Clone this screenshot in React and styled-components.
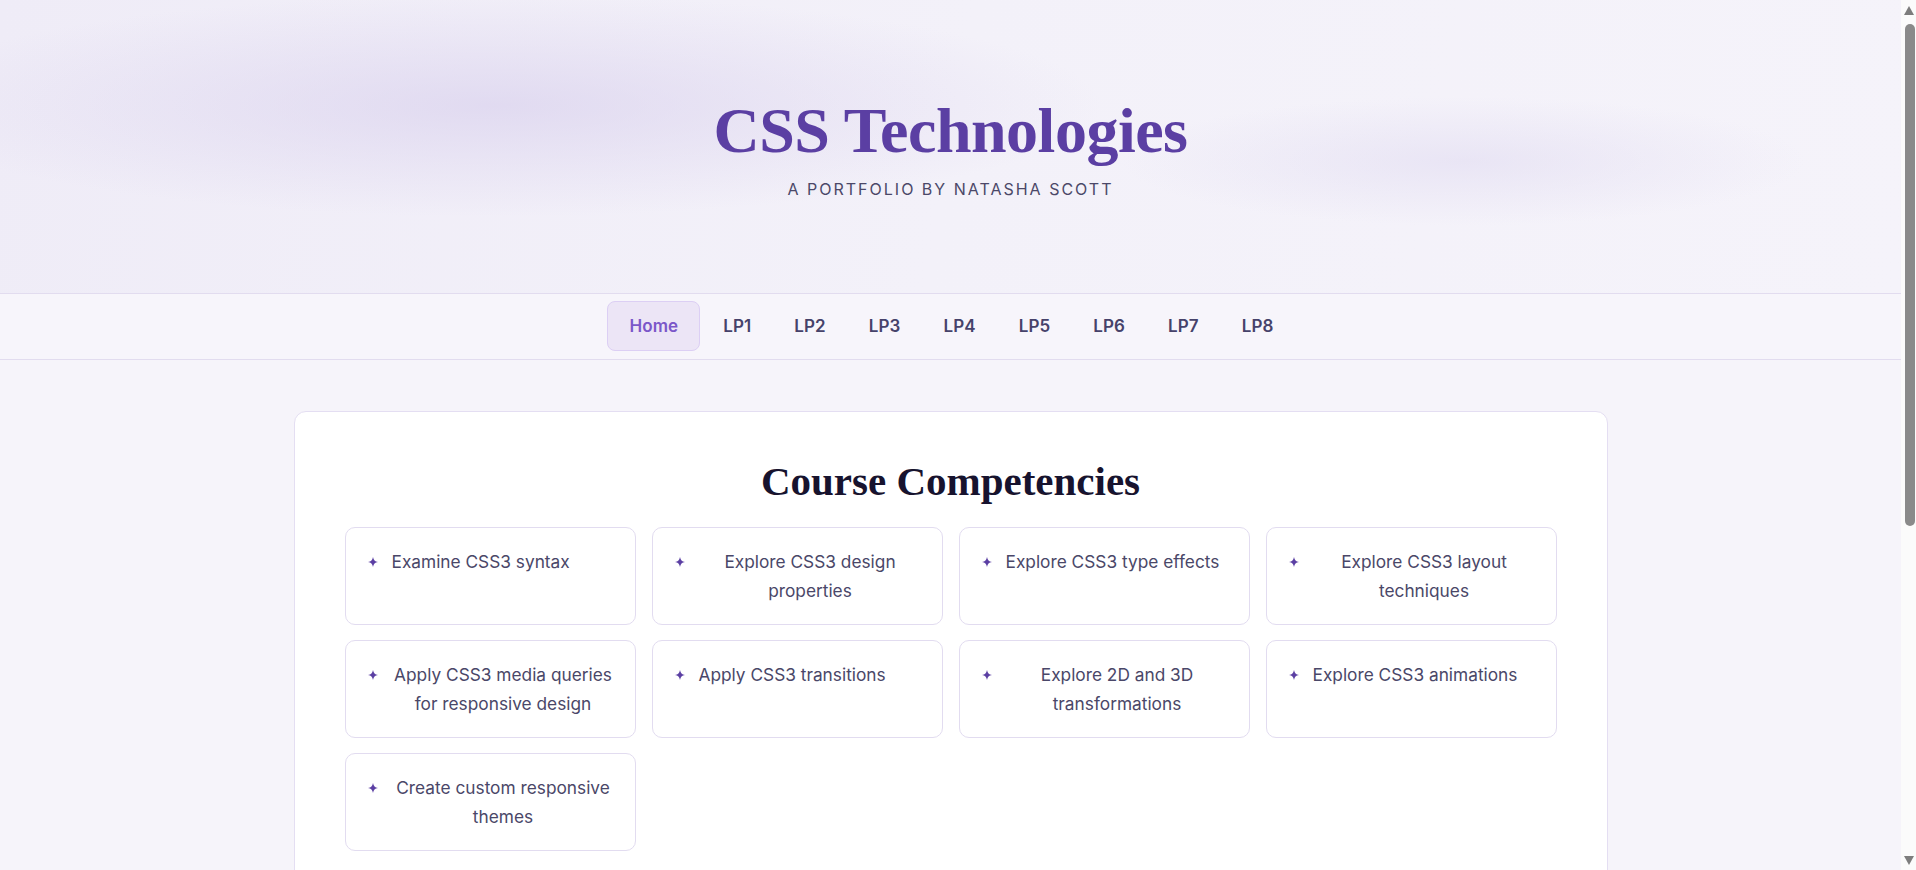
import React from "react";
import styled, { createGlobalStyle } from "styled-components";

const GlobalStyle = createGlobalStyle`
  * { box-sizing: border-box; }
  body {
    margin: 0;
    padding-right: 15px;
    background: #f6f4fa;
    font-family: Inter, "Noto Sans", "Liberation Sans", sans-serif;
    color: #4a4768;
  }
`;

const competencies = [
  "Examine CSS3 syntax",
  "Explore CSS3 design properties",
  "Explore CSS3 type effects",
  "Explore CSS3 layout techniques",
  "Apply CSS3 media queries for responsive design",
  "Apply CSS3 transitions",
  "Explore 2D and 3D transformations",
  "Explore CSS3 animations",
  "Create custom responsive themes",
];

const links = ["Home", "LP1", "LP2", "LP3", "LP4", "LP5", "LP6", "LP7", "LP8"];

const Header = styled.header`
  height: 293px;
  padding-top: 92px;
  text-align: center;
  background:
    radial-gradient(ellipse 32% 38% at 26% 36%, rgba(214, 205, 236, 0.6), rgba(214, 205, 236, 0) 100%),
    radial-gradient(ellipse 18% 22% at 77% 55%, rgba(222, 216, 240, 0.5), rgba(222, 216, 240, 0) 100%),
    linear-gradient(100deg, #efecf7 0%, #f3f1f9 50%, #f5f3fa 100%);
`;

const Title = styled.h1`
  margin: 0;
  font-family: "Liberation Serif", "DejaVu Serif", serif;
  font-weight: 700;
  font-size: 64px;
  line-height: 77px;
  letter-spacing: -0.5px;
  color: #5b3fa3;
`;

const Subtitle = styled.p`
  margin: 8px 0 0;
  font-size: 16px;
  line-height: 24px;
  letter-spacing: 2px;
  text-transform: uppercase;
  color: #4b4868;
`;

const Nav = styled.nav`
  display: flex;
  justify-content: center;
  gap: 3px;
  padding: 7px 0 8px;
  background: #f7f5fb;
  border-top: 1px solid #e2dcef;
  border-bottom: 1px solid #e2dcef;
`;

const NavLink = styled.a`
  display: block;
  padding: 12px ${(p) => (p.$active ? "21px" : "19px")};
  border-radius: 8px;
  border: 1px solid ${(p) => (p.$active ? "#dccff4" : "transparent")};
  background: ${(p) => (p.$active ? "#ece5f6" : "transparent")};
  color: ${(p) => (p.$active ? "#7b57c9" : "#46426a")};
  font-size: 17px;
  font-weight: 600;
  line-height: 24px;
  letter-spacing: 0.1px;
  text-decoration: none;
  cursor: pointer;
`;

const Main = styled.main`
  padding: 51px 0 60px;
`;

const Card = styled.section`
  width: 1314px;
  margin: 0 auto;
  padding: 45px 50px 52px;
  background: #fff;
  border: 1px solid #e4def2;
  border-radius: 12px;
`;

const Heading = styled.h2`
  margin: 0 0 22px;
  text-align: center;
  font-family: "Liberation Serif", "DejaVu Serif", serif;
  font-weight: 700;
  font-size: 41px;
  line-height: 48px;
  color: #17132e;
`;

const Grid = styled.ul`
  display: grid;
  grid-template-columns: repeat(4, 1fr);
  gap: 15px 16px;
  margin: 0;
  padding: 0;
  list-style: none;
`;

const Item = styled.li`
  display: flex;
  align-items: flex-start;
  gap: 14px;
  padding: 19px 20px 19px 22px;
  border: 1px solid #e2dcf0;
  border-radius: 10px;
  font-size: 17.3px;
  line-height: 29px;
  text-align: center;
  color: #4a4768;
`;

const Star = styled.svg`
  flex: none;
  width: 10px;
  height: 10px;
  margin-top: 10px;
  fill: #5b3fa3;
`;

const ScrollTrack = styled.div`
  position: fixed;
  top: 0;
  right: 0;
  bottom: 0;
  width: 15px;
  background: #fbfbfb;
`;

const ScrollThumb = styled.div`
  position: absolute;
  top: 24px;
  left: 4px;
  width: 10px;
  height: 502px;
  border-radius: 5px;
  background: #8a8a8a;
`;

const Arrow = styled.div`
  position: absolute;
  left: 3px;
  ${(p) => (p.$down ? "bottom: 5px;" : "top: 6px;")}
  width: 0;
  height: 0;
  border-left: 5px solid transparent;
  border-right: 5px solid transparent;
  ${(p) =>
    p.$down ? "border-top: 9px solid #7d7d7d;" : "border-bottom: 9px solid #7d7d7d;"}
`;

function Spark() {
  return (
    <Star viewBox="0 0 10 10">
      <path d="M5 0 C5.6 3.2 6.8 4.4 10 5 C6.8 5.6 5.6 6.8 5 10 C4.4 6.8 3.2 5.6 0 5 C3.2 4.4 4.4 3.2 5 0 Z" />
    </Star>
  );
}

export default function App() {
  return (
    <>
      <GlobalStyle />
      <Header>
        <Title>CSS Technologies</Title>
        <Subtitle>A Portfolio by Natasha Scott</Subtitle>
      </Header>
      <Nav>
        {links.map((l) => (
          <NavLink key={l} $active={l === "Home"}>
            {l}
          </NavLink>
        ))}
      </Nav>
      <Main>
        <Card>
          <Heading>Course Competencies</Heading>
          <Grid>
            {competencies.map((c) => (
              <Item key={c}>
                <Spark />
                <span>{c}</span>
              </Item>
            ))}
          </Grid>
        </Card>
      </Main>
      <ScrollTrack>
        <Arrow />
        <ScrollThumb />
        <Arrow $down />
      </ScrollTrack>
    </>
  );
}
